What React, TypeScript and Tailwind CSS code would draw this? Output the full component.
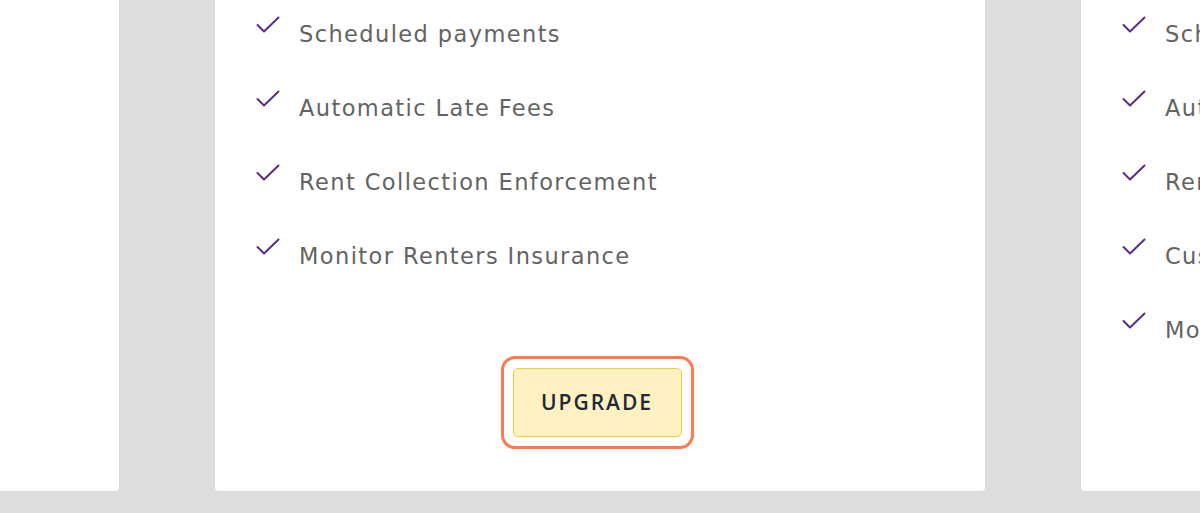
import React from 'react';

const middleFeatures = [
  'Scheduled payments',
  'Automatic Late Fees',
  'Rent Collection Enforcement',
  'Monitor Renters Insurance',
];

const rightFeatures = [
  'Scheduled payments',
  'Automatic Late Fees',
  'Rent Collection Enforcement',
  'Custom Lease Terms',
  'Monitor Renters Insurance',
];

function CheckIcon() {
  return (
    <svg width="24" height="18" viewBox="0 0 24 18" fill="none" className="shrink-0 mt-[2px]">
      <polyline points="1.5,9 8,15.5 22.5,1.5" stroke="#5b2a8a" strokeWidth="2" strokeLinecap="round" strokeLinejoin="round" />
    </svg>
  );
}

function PlanCard({ features }: { features: string[] }) {
  return (
    <div className="w-[770px] shrink-0 bg-white rounded-[4px] flex flex-col pt-[40px] pb-[42px]">
      <ul className="flex flex-col gap-[34px] pl-[41px]">
        {features.map((f, i) => (
          <li key={i} className="h-[40px] flex items-start pt-[2px]">
            <CheckIcon />
            <span className="ml-[19px] text-[22.5px] leading-[24px] mt-[8px] tracking-[1.4px] text-[#636363] font-['DejaVu_Sans',sans-serif] whitespace-nowrap">{f}</span>
          </li>
        ))}
      </ul>
      <div className="flex-1 min-h-[8px]" />
      <div className="flex justify-center pr-[6px]">
        <div className="border-[3px] border-[#ff7a50] rounded-[14px] p-[9px]">
          <button className="w-[169px] h-[69px] bg-[#fff1c1] border-[1.5px] border-[#f6cf2c] rounded-[5px] text-[#1c2a3a] text-[21px] font-semibold tracking-[2px] font-['Open_Sans',sans-serif]">
            UPGRADE
          </button>
        </div>
      </div>
    </div>
  );
}

export default function App() {
  return (
    <div className="h-[513px] w-full overflow-hidden bg-[#dddddd] flex flex-col justify-end pb-[22px]">
      <div className="flex justify-center gap-[96px]">
        <PlanCard features={rightFeatures} />
        <PlanCard features={middleFeatures} />
        <PlanCard features={rightFeatures} />
      </div>
    </div>
  );
}
